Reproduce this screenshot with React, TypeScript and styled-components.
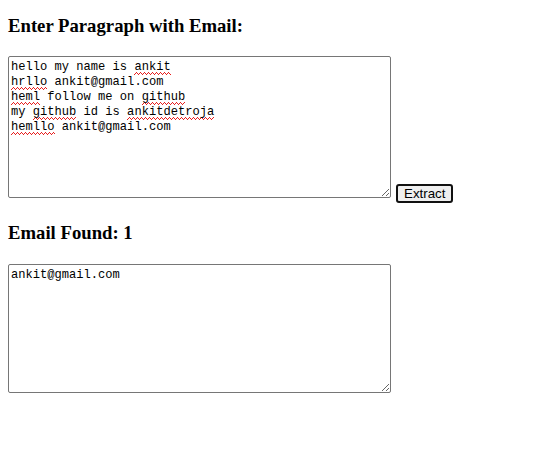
import React from "react";
import styled, { createGlobalStyle } from "styled-components";

const Global = createGlobalStyle`
  html, body { margin: 0; padding: 0; background: #fff; }
  body { font-family: "Liberation Serif", "Times New Roman", serif; color: #000; }
`;

const Page = styled.div`
  padding: 0 8px;
  display: flex;
  flex-direction: column;
  align-items: flex-start;
`;

const Heading = styled.h3<{ $top: number; $bottom: number }>`
  font-family: "Liberation Serif", "Times New Roman", serif;
  font-size: 18.72px;
  font-weight: bold;
  line-height: 22px;
  margin: ${(p) => p.$top}px 0 ${(p) => p.$bottom}px;
`;

const Row = styled.div`
  display: flex;
  align-items: flex-end;
  gap: 5px;
`;

const Field = styled.div<{ $h: number }>`
  position: relative;
  width: 383px;
  height: ${(p) => p.$h}px;
  background: #fff;
  border: 1px solid #767676;
  border-radius: 2px;
  box-sizing: border-box;
`;

const mono = `
  font-family: "Liberation Mono", "DejaVu Sans Mono", monospace;
  font-size: 12.1px;
  line-height: 15px;
  letter-spacing: 0;
  padding: 3px 2px 2px;
  white-space: pre-wrap;
  word-wrap: break-word;
`;

const Backdrop = styled.div`
  position: absolute;
  inset: 0;
  ${mono}
  color: transparent;
  pointer-events: none;
`;

const Miss = styled.span`
  padding-bottom: 1px;
  background-image:
    linear-gradient(to right, transparent 2px, #e81d1d 2px, #e81d1d 3px, transparent 3px),
    linear-gradient(to right, transparent 1px, #e81d1d 1px, #e81d1d 2px, transparent 2px, transparent 3px, #e81d1d 3px),
    linear-gradient(to right, #e81d1d 1px, transparent 1px);
  background-size: 4px 1px, 4px 1px, 4px 1px;
  background-repeat: repeat-x;
  background-position: 0 calc(100% - 2px), 0 calc(100% - 1px), 0 100%;
`;

const Area = styled.textarea`
  position: relative;
  display: block;
  width: 100%;
  height: 100%;
  box-sizing: border-box;
  margin: 0;
  border: none;
  outline: none;
  background: transparent;
  color: #000;
  resize: both;
  ${mono}
`;

const Button = styled.button`
  font-family: "Liberation Sans", Arial, sans-serif;
  font-size: 13.33px;
  line-height: 15px;
  height: 19px;
  padding: 0 6px;
  margin-bottom: -5px;
  background: #efefef;
  color: #000;
  border: 2px solid #111;
  border-radius: 3px;
  box-sizing: border-box;
  cursor: pointer;
`;

const input =
  "hello my name is ankit\nhrllo ankit@gmail.com\nheml follow me on github\nmy github id is ankitdetroja\nhemllo ankit@gmail.com";

export default function App() {
  return (
    <>
      <Global />
      <Page>
        <Heading $top={15} $bottom={19}>Enter Paragraph with Email:</Heading>
        <Row>
          <Field $h={142}>
            <Backdrop aria-hidden>
              hello my name is <Miss>ankit</Miss>
              {"\n"}
              <Miss>hrllo</Miss> ankit@gmail.com
              {"\n"}
              <Miss>heml</Miss> follow me on <Miss>github</Miss>
              {"\n"}
              my <Miss>github</Miss> id is <Miss>ankitdetroja</Miss>
              {"\n"}
              <Miss>hemllo</Miss> ankit@gmail.com
            </Backdrop>
            <Area defaultValue={input} spellCheck={false} />
          </Field>
          <Button>Extract</Button>
        </Row>
        <Heading $top={24} $bottom={20}>Email Found: 1</Heading>
        <Field $h={129}>
          <Area defaultValue="ankit@gmail.com" spellCheck={false} readOnly />
        </Field>
      </Page>
    </>
  );
}
